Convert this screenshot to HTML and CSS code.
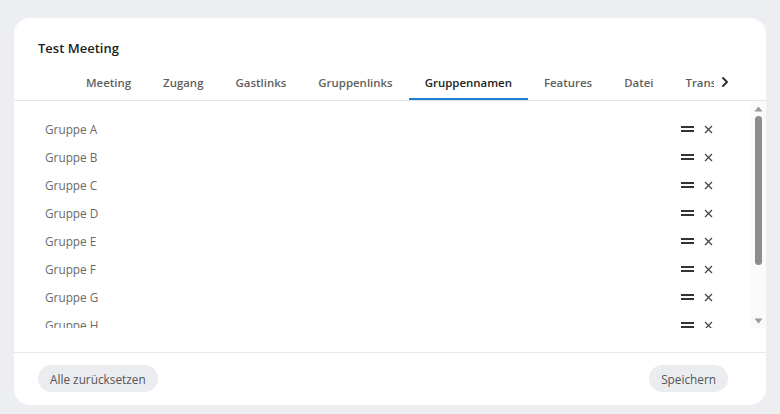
FILE: index.html
```html
<!DOCTYPE html>
<html lang="de">
<head>
<meta charset="utf-8">
<title>Test Meeting</title>
<link rel="stylesheet" href="styles.css">
</head>
<body>
<div class="card">
  <div class="header">
    <div class="title">Test Meeting</div>
    <div class="tabbar">
      <div class="tab-spacer"></div>
      <div class="tabs-viewport">
        <div class="tabs">
          <div class="tab">Meeting</div>
          <div class="tab">Zugang</div>
          <div class="tab">Gastlinks</div>
          <div class="tab">Gruppenlinks</div>
          <div class="tab active">Gruppennamen</div>
          <div class="tab">Features</div>
          <div class="tab">Datei</div>
          <div class="tab">Transkription</div>
        </div>
      </div>
      <div class="tab-next">
        <svg width="10" height="12" viewBox="0 0 10 12"><path d="M3 2 L7 6 L3 10" fill="none" stroke="#333" stroke-width="2" stroke-linecap="round" stroke-linejoin="round"/></svg>
      </div>
    </div>
  </div>
  <div class="content">
    <div class="scroll">
      <div class="list">
        <div class="row"><span class="name">Gruppe A</span><span class="actions"><span class="drag"></span><svg class="remove" width="9" height="9" viewBox="0 0 9 9"><path d="M1 1 L8 8 M8 1 L1 8"/></svg></span></div>
        <div class="row"><span class="name">Gruppe B</span><span class="actions"><span class="drag"></span><svg class="remove" width="9" height="9" viewBox="0 0 9 9"><path d="M1 1 L8 8 M8 1 L1 8"/></svg></span></div>
        <div class="row"><span class="name">Gruppe C</span><span class="actions"><span class="drag"></span><svg class="remove" width="9" height="9" viewBox="0 0 9 9"><path d="M1 1 L8 8 M8 1 L1 8"/></svg></span></div>
        <div class="row"><span class="name">Gruppe D</span><span class="actions"><span class="drag"></span><svg class="remove" width="9" height="9" viewBox="0 0 9 9"><path d="M1 1 L8 8 M8 1 L1 8"/></svg></span></div>
        <div class="row"><span class="name">Gruppe E</span><span class="actions"><span class="drag"></span><svg class="remove" width="9" height="9" viewBox="0 0 9 9"><path d="M1 1 L8 8 M8 1 L1 8"/></svg></span></div>
        <div class="row"><span class="name">Gruppe F</span><span class="actions"><span class="drag"></span><svg class="remove" width="9" height="9" viewBox="0 0 9 9"><path d="M1 1 L8 8 M8 1 L1 8"/></svg></span></div>
        <div class="row"><span class="name">Gruppe G</span><span class="actions"><span class="drag"></span><svg class="remove" width="9" height="9" viewBox="0 0 9 9"><path d="M1 1 L8 8 M8 1 L1 8"/></svg></span></div>
        <div class="row"><span class="name">Gruppe H</span><span class="actions"><span class="drag"></span><svg class="remove" width="9" height="9" viewBox="0 0 9 9"><path d="M1 1 L8 8 M8 1 L1 8"/></svg></span></div>
        <div class="row"><span class="name">Gruppe I</span><span class="actions"><span class="drag"></span><svg class="remove" width="9" height="9" viewBox="0 0 9 9"><path d="M1 1 L8 8 M8 1 L1 8"/></svg></span></div>
      </div>
    </div>
    <div class="scrollbar">
      <div class="sb-arrow"><svg width="9" height="6" viewBox="0 0 9 6"><path d="M4.5 0.5 L8.5 5.5 L0.5 5.5 Z" fill="#9a9a9a"/></svg></div>
      <div class="sb-track"><div class="sb-thumb"></div></div>
      <div class="sb-arrow"><svg width="9" height="6" viewBox="0 0 9 6"><path d="M0.5 0.5 L8.5 0.5 L4.5 5.5 Z" fill="#9a9a9a"/></svg></div>
    </div>
  </div>
  <div class="footer">
    <button class="btn">Alle zurücksetzen</button>
    <button class="btn">Speichern</button>
  </div>
</div>
</body>
</html>
```
FILE: styles.css
```css
* { box-sizing: border-box; }
html, body { margin: 0; padding: 0; }
body {
  background: #edeef2;
  font-family: "Open Sans", "Liberation Sans", sans-serif;
  width: 780px;
  height: 414px;
  overflow: hidden;
  padding-top: 18px;
}
.card {
  margin: 0 14px;
  height: 387px;
  background: #fff;
  border-radius: 16px;
  display: flex;
  flex-direction: column;
  overflow: hidden;
}
.header {
  padding: 20px 30px 0 24px;
  border-bottom: 1px solid #e4e5e8;
}
.title {
  font-size: 13px;
  font-weight: 600;
  line-height: 21px;
  color: #1e1e1e;
}
.tabbar {
  margin-top: 7px;
  height: 34px;
  display: flex;
  align-items: stretch;
}
.tab-spacer { width: 32px; flex: none; }
.tabs-viewport {
  flex: 1;
  overflow: hidden;
}
.tabs {
  display: flex;
  height: 100%;
}
.tab {
  flex: none;
  padding: 0 16px;
  font-size: 11.45px;
  font-weight: 600;
  line-height: 33px;
  color: #5f5f5f;
  white-space: nowrap;
  position: relative;
}
.tab.active { color: #222; }
.tab.active::after {
  content: "";
  position: absolute;
  left: 0; right: 0; bottom: 0;
  height: 2px;
  background: #1f7bd3;
}
.tab-next {
  width: 22px;
  flex: none;
  display: flex;
  align-items: center;
  justify-content: center;
  padding-bottom: 3px;
}
.content {
  height: 251px;
  padding-bottom: 24px;
  display: flex;
}
.scroll {
  flex: 1;
  height: 227px;
  overflow: hidden;
}
.list {
  padding: 14px 0 12px;
}
.row {
  height: 28px;
  display: flex;
  align-items: center;
  justify-content: space-between;
  padding: 0 38px 0 31px;
}
.name {
  font-size: 11.8px;
  color: #6a6a6a;
}
.actions {
  display: flex;
  align-items: center;
  gap: 10px;
}
.drag {
  width: 13px;
  height: 6px;
  border-top: 2px solid #333;
  border-bottom: 2px solid #333;
}
.remove {
  fill: none;
  stroke: #444;
  stroke-width: 1.2;
}
.scrollbar {
  width: 15px;
  height: 227px;
  flex: none;
  background: #fafafa;
  display: flex;
  flex-direction: column;
}
.sb-arrow {
  height: 15px;
  flex: none;
  display: flex;
  align-items: center;
  justify-content: center;
}
.sb-track {
  flex: 1;
  padding: 0 4px;
}
.sb-thumb {
  width: 7px;
  height: 149px;
  border-radius: 4px;
  background: #8d8d8d;
}
.footer {
  border-top: 1px solid #e8e9ec;
  padding: 12px 38px 13px 24px;
  display: flex;
  justify-content: space-between;
  align-items: center;
}
.btn {
  height: 27px;
  border: none;
  border-radius: 14px;
  background: #ebecf0;
  color: #555;
  font-family: "Open Sans", "Liberation Sans", sans-serif;
  font-size: 11.8px;
  padding: 0 12px;
}
```
